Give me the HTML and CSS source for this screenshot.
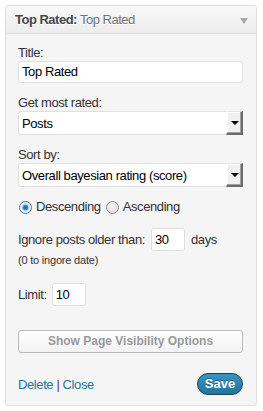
FILE: index.html
```html
<!DOCTYPE html>
<html lang="en">

<head>
    <meta charset="UTF-8">
    <meta name="viewport" content="width=device-width, initial-scale=1.0">
    <title>Top Rated Widget</title>
    <link rel="stylesheet" href="styles.css">
</head>

<body>
    <div class="widget">
        <div class="widget-top">
            <h4>Top Rated: <span class="in-title">Top Rated</span></h4>
            <span class="toggle"></span>
        </div>
        <div class="widget-inside">
            <div class="field">
                <label>Title:</label>
                <div class="text-input wide">Top Rated</div>
            </div>

            <div class="field">
                <label>Get most rated:</label>
                <div class="select">
                    <span class="value">Posts</span>
                    <span class="arrow"></span>
                </div>
            </div>

            <div class="field">
                <label>Sort by:</label>
                <div class="select">
                    <span class="value">Overall bayesian rating (score)</span>
                    <span class="arrow"></span>
                </div>
            </div>

            <div class="radios">
                <span class="radio checked"></span><span class="radio-label">Descending</span>
                <span class="radio"></span><span class="radio-label">Ascending</span>
            </div>

            <div class="inline-row ignore">
                <span>Ignore posts older than:</span>
                <div class="text-input small">30</div>
                <span>days</span>
            </div>
            <div class="note">(0 to ingore date)</div>

            <div class="inline-row limit">
                <span>Limit:</span>
                <div class="text-input small">10</div>
            </div>

            <div class="visibility-btn">Show Page Visibility Options</div>

            <div class="widget-control">
                <div class="links">
                    <a href="#">Delete</a> <span class="sep">|</span> <a href="#">Close</a>
                </div>
                <div class="save-btn">Save</div>
            </div>
        </div>
    </div>
</body>

</html>
```

FILE: styles.css
```css
body {
    margin: 0;
    padding: 5px 6px 5px 5px;
    background: #fff;
    font-family: "Liberation Sans", Arial, sans-serif;
    font-size: 13px;
    letter-spacing: -0.4px;
    color: #333;
}

.widget {
    border: 1px solid #dfdfdf;
    border-radius: 3px;
    background-color: #f5f5f5;
}

.widget-top {
    height: 27px;
    border-bottom: 1px solid #dfdfdf;
    background: linear-gradient(to bottom, #f9f9f9, #ececec);
    border-radius: 3px 3px 0 0;
    display: flex;
    align-items: center;
    justify-content: space-between;
    padding: 0 8px 0 9px;
}

.widget-top h4 {
    margin: 0;
    font-size: 13px;
    font-weight: bold;
    letter-spacing: -0.5px;
    color: #464646;
    text-shadow: 0 1px 0 #fff;
}

.in-title {
    font-weight: normal;
    color: #6d7378;
}

.toggle {
    width: 0;
    height: 0;
    border-left: 4px solid transparent;
    border-right: 4px solid transparent;
    border-top: 6px solid #a8a8a8;
    margin-top: 2px;
}

.widget-inside {
    padding: 11px 13px 10px 12px;
}

.field {
    margin-bottom: 12px;
}

.field label {
    display: block;
    line-height: 16px;
}

.text-input {
    box-sizing: border-box;
    height: 22px;
    line-height: 20px;
    background: #fff;
    border: 1px solid #dfdfdf;
    border-radius: 3px;
    color: #000;
    padding: 0 3px;
}

.select {
    box-sizing: border-box;
    height: 24px;
    background: #fff;
    border: 1px solid #dfdfdf;
    border-right: none;
    border-radius: 3px 0 0 3px;
    display: flex;
    align-items: center;
    justify-content: space-between;
    color: #000;
}

.select .value {
    padding-left: 3px;
}

.select .arrow {
    box-sizing: border-box;
    width: 17px;
    height: 24px;
    margin-top: -1px;
    margin-bottom: -1px;
    background: #f0f0f0;
    border-top: 1px solid #e3e3e3;
    border-left: 1px solid #fff;
    border-right: 2px solid #696969;
    border-bottom: 2px solid #696969;
    box-shadow: inset -1px -1px 0 #a0a0a0, inset 1px 1px 0 #fff;
    position: relative;
}

.select .arrow::after {
    content: "";
    position: absolute;
    left: 4px;
    top: 9px;
    border-left: 4px solid transparent;
    border-right: 4px solid transparent;
    border-top: 4px solid #000;
}

.radios {
    display: flex;
    align-items: center;
    line-height: 16px;
    margin-top: 12px;
    padding-left: 1px;
}

.radio {
    box-sizing: border-box;
    width: 13px;
    height: 13px;
    border-radius: 50%;
    border: 1px solid #8d8d8d;
    background: radial-gradient(circle at 40% 35%, #fafafa, #d4d4d4);
    margin-right: 4px;
}

.radio.checked {
    border-color: #5a7a9a;
    background: radial-gradient(circle, #1c5a93 0, #3b8fd0 2.5px, #dfe8f0 3.5px, #f2f6fa 6px);
}

.radio-label {
    margin-right: 5px;
}

.inline-row {
    display: flex;
    align-items: center;
    gap: 6px;
}

.inline-row.ignore {
    margin-top: 13px;
}

.text-input.small {
    width: 34px;
    height: 23px;
    line-height: 21px;
}

.note {
    font-size: 11px;
    letter-spacing: -0.2px;
    line-height: 14px;
    margin-top: 2px;
}

.inline-row.limit {
    margin-top: 16px;
    gap: 5px;
}

.visibility-btn {
    margin-top: 24px;
    box-sizing: border-box;
    height: 23px;
    line-height: 21px;
    border: 1px solid #bbb;
    border-radius: 3px;
    background: linear-gradient(to bottom, #fff, #f2f2f2);
    text-align: center;
    font-weight: bold;
    font-size: 12px;
    letter-spacing: 0;
    color: #999;
}

.widget-control {
    margin-top: 20px;
    display: flex;
    justify-content: space-between;
    align-items: center;
}

.links {
    margin-top: 1px;
}

.links a {
    color: #21759b;
    text-decoration: none;
}

.sep {
    color: #6a2f6a;
}

.save-btn {
    box-sizing: border-box;
    width: 46px;
    height: 22px;
    line-height: 20px;
    border: 1px solid #13455b;
    border-radius: 11px;
    background: linear-gradient(to bottom, #3a93c2, #21759b);
    color: #fff;
    font-weight: bold;
    letter-spacing: 0;
    text-align: center;
    text-shadow: 0 -1px 0 rgba(0, 0, 0, 0.3);
}
```
